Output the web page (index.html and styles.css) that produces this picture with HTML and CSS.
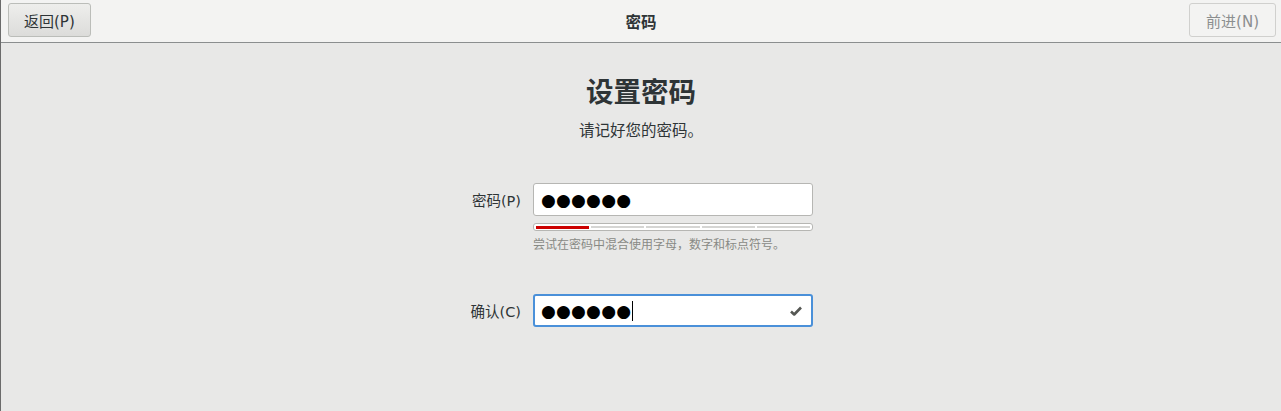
FILE: index.html
```html
<!DOCTYPE html>
<html lang="zh-CN">
<head>
<meta charset="utf-8">
<link rel="stylesheet" href="styles.css">
</head>
<body>
<div class="window">
  <header class="headerbar">
    <button class="btn">返回(P)</button>
    <div class="title">密码</div>
    <button class="btn disabled">前进(N)</button>
  </header>
  <main class="content">
    <h1 class="heading">设置密码</h1>
    <p class="sub">请记好您的密码。</p>
    <div class="form">
      <div class="row">
        <label class="label">密码(P)</label>
        <div class="field">
          <div class="entry"><span class="dots">●●●●●●</span></div>
        </div>
      </div>
      <div class="row meta">
        <div class="label"></div>
        <div class="field">
          <div class="levelbar">
            <span class="seg filled"></span><span class="seg"></span><span class="seg"></span><span class="seg"></span><span class="seg"></span>
          </div>
          <div class="hint">尝试在密码中混合使用字母，数字和标点符号。</div>
        </div>
      </div>
      <div class="row confirm">
        <label class="label">确认(C)</label>
        <div class="field">
          <div class="entry focused"><span class="dots">●●●●●●</span><span class="caret"></span>
            <svg class="check" width="12" height="10" viewBox="0 0 12 10"><path d="M1 5.5 L4.2 8.5 L11 1.5" fill="none" stroke="#555753" stroke-width="2.6" stroke-linejoin="round"/></svg>
          </div>
        </div>
      </div>
    </div>
  </main>
</div>
</body>
</html>
```
FILE: styles.css
```css
html, body { margin: 0; padding: 0; }
body {
  width: 1281px; height: 411px; overflow: hidden;
  font-family: "DejaVu Sans", "Noto Sans CJK SC", sans-serif;
  color: #2e3436;
}
.window {
  height: 411px;
  border-left: 1px solid #6b6b6b;
  background: #e8e8e7;
  box-sizing: border-box;
}
.headerbar {
  height: 43px;
  box-sizing: border-box;
  background: #f3f3f2;
  border-bottom: 1px solid #8b8e8f;
  display: flex; align-items: center; justify-content: space-between;
  padding: 0 5px 2px 7px;
  position: relative;
}
.btn {
  height: 34px;
  padding: 0 15px;
  font-family: "DejaVu Sans", "Noto Sans CJK SC", sans-serif;
  font-size: 15px;
  color: #2e3436;
  border: 1px solid #bbbdb9;
  border-radius: 3px;
  background: linear-gradient(#eeeeec, #dcdcda);
}
.btn.disabled {
  color: #8b8e8f;
  background: #f3f3f2;
  border-color: #d0d0ce;
  padding: 0 16px;
}
.title {
  position: absolute; left: 0; right: 0; top: 0; height: 41px;
  display: flex; align-items: center; justify-content: center;
  font-weight: bold; font-size: 15.5px; pointer-events: none;
}
.content {
  display: flex; flex-direction: column; align-items: center;
}
.heading {
  margin: 30px 0 0; font-size: 27.5px; font-weight: bold; line-height: 38px;
  color: #2e3436;
}
.sub { margin: 10px 0 0; font-size: 15.5px; line-height: 20px; }
.form { margin-top: 42px; display: flex; flex-direction: column; margin-left: -28px; }
.row { display: flex; align-items: center; }
.label {
  width: 80px; text-align: right; padding-right: 12px;
  font-size: 14.5px; color: #2e3436;
}
.field { width: 280px; }
.entry {
  height: 33px; box-sizing: border-box;
  background: #fff;
  border: 1px solid #b6b6b3; border-radius: 3px;
  display: flex; align-items: center; padding-left: 7px;
  position: relative;
}
.entry.focused { border: 2px solid #4a90d9; padding-left: 6px; }
.dots {
  font-family: "DejaVu Sans", sans-serif; font-size: 17px; color: #000;
  letter-spacing: 0.2px; line-height: 20px;
}
.caret { width: 1px; height: 20px; background: #000; margin-left: 1px; }
.check { position: absolute; right: 9px; top: 10px; }
.meta { align-items: flex-start; margin-top: 7px; }
.levelbar {
  height: 8px; box-sizing: border-box;
  background: #fff; border: 1px solid #b6b6b3; border-radius: 3px;
  display: flex; gap: 2px; padding: 2px 2px;
}
.seg { flex: 1; height: 2px; border: 1px solid #d5d5d3; border-width: 1px 0; box-sizing: border-box; }
.seg.filled { background: #cc0000; border: none; height: 3px; margin-top: -0.5px; }
.hint { margin-top: 7px; font-size: 12px; color: #888a85; line-height: 15px; }
.confirm { margin-top: 41px; }
```
